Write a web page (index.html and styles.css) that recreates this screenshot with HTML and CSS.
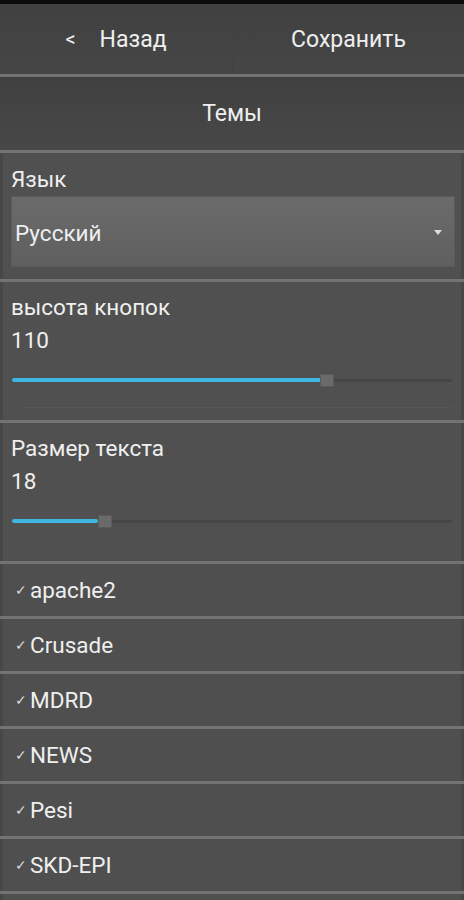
FILE: index.html
```html
<!DOCTYPE html>
<html lang="ru">
<head>
<meta charset="utf-8">
<link rel="stylesheet" href="styles.css">
</head>
<body>
<div class="screen">
  <div class="statusbar"></div>
  <div class="header">
    <div class="hbtn"><span class="lt">&lt;</span><span>Назад</span></div>
    <div class="hbtn">Сохранить</div>
  </div>
  <div class="sep"></div>
  <div class="title">Темы</div>
  <div class="sep"></div>
  <div class="section lang">
    <div class="label">Язык</div>
    <div class="select">
      <span>Русский</span>
      <svg class="arrow" width="8" height="5" viewBox="0 0 8 5"><path d="M0 0H8L4 5Z" fill="#dcdcdc"/></svg>
    </div>
  </div>
  <div class="sep"></div>
  <div class="section slider-sec">
    <div class="label">высота кнопок</div>
    <div class="value">110</div>
    <div class="slider">
      <div class="track"></div>
      <div class="fill" style="width:310px"></div>
      <div class="thumb" style="left:308px"></div>
    </div>
    <div class="dots"></div>
  </div>
  <div class="sep"></div>
  <div class="section slider-sec">
    <div class="label">Размер текста</div>
    <div class="value">18</div>
    <div class="slider">
      <div class="track"></div>
      <div class="fill" style="width:86px"></div>
      <div class="thumb" style="left:86px"></div>
    </div>
    <div class="dots blank"></div>
  </div>
  <div class="sep"></div>
  <div class="item"><span class="check">✓</span>apache2</div>
  <div class="sep"></div>
  <div class="item"><span class="check">✓</span>Crusade</div>
  <div class="sep"></div>
  <div class="item"><span class="check">✓</span>MDRD</div>
  <div class="sep"></div>
  <div class="item"><span class="check">✓</span>NEWS</div>
  <div class="sep"></div>
  <div class="item"><span class="check">✓</span>Pesi</div>
  <div class="sep"></div>
  <div class="item"><span class="check">✓</span>SKD-EPI</div>
  <div class="sep"></div>
  <div class="item"></div>
</div>
</body>
</html>
```
FILE: styles.css
```css
html, body {
  margin: 0;
  padding: 0;
  background: #4f4f4f;
}
.screen {
  width: 464px;
  height: 900px;
  overflow: hidden;
  font-family: Roboto, "Noto Sans", sans-serif;
  color: #efefef;
  background: #4f4f4f;
}
.statusbar {
  height: 4px;
  background: #0c0c0c;
}
.header {
  display: grid;
  grid-template-columns: 1fr 1fr;
  height: 70px;
}
.hbtn {
  display: flex;
  align-items: center;
  justify-content: center;
  gap: 24px;
  font-size: 23px;
  background: linear-gradient(#404040, #464646);
  border-left: 1px solid #424242;
}
.hbtn:first-child {
  border-left: none;
}
.lt {
  font-size: 20px;
}
.sep {
  height: 3px;
  background: #737373;
}
.title {
  height: 73px;
  display: flex;
  align-items: center;
  justify-content: center;
  font-size: 23px;
  background: linear-gradient(#404040, #484848);
}
.section {
  background: #505050;
  border-left: 3px solid #474747;
  border-right: 3px solid #474747;
  box-sizing: border-box;
  padding: 13px 6px 0 8px;
}
.label, .value {
  font-size: 22.5px;
  line-height: 26px;
}
.lang {
  height: 126px;
}
.select {
  margin-top: 4px;
  height: 71px;
  display: flex;
  align-items: center;
  justify-content: space-between;
  padding: 2px 12px 0 3px;
  font-size: 22.5px;
  background: linear-gradient(#6b6b6b, #5f5f5f);
  border: 1px solid #5a5a5a;
  box-sizing: border-box;
}
.slider-sec {
  height: 138px;
  padding-top: 12px;
}
.value {
  margin-top: 7px;
}
.slider {
  position: relative;
  height: 14px;
  margin: 21px 3px 0 1px;
}
.track {
  position: absolute;
  left: 0;
  right: 0;
  top: 5px;
  height: 3px;
  background: #464646;
  border-radius: 1px;
}
.fill {
  position: absolute;
  left: 0;
  top: 4px;
  height: 4px;
  background: #3fb7e2;
  border-radius: 2px;
}
.thumb {
  position: absolute;
  top: 0;
  width: 14px;
  height: 13px;
  background: #6a6a6a;
  border: 1px solid #5a5a5a;
  box-sizing: border-box;
}
.dots {
  margin: 19px 3px 0 12px;
  height: 0;
  border-top: 1px dotted #5e5e5e;
}
.dots.blank {
  border-top-color: transparent;
}
.item {
  height: 52px;
  display: flex;
  align-items: center;
  padding-left: 12px;
  font-size: 22.5px;
  background: #4f4f4f;
  border-left: 3px solid #474747;
  border-right: 3px solid #474747;
}
.check {
  font-size: 14px;
  width: 15px;
  color: #dcdcdc;
}
```
